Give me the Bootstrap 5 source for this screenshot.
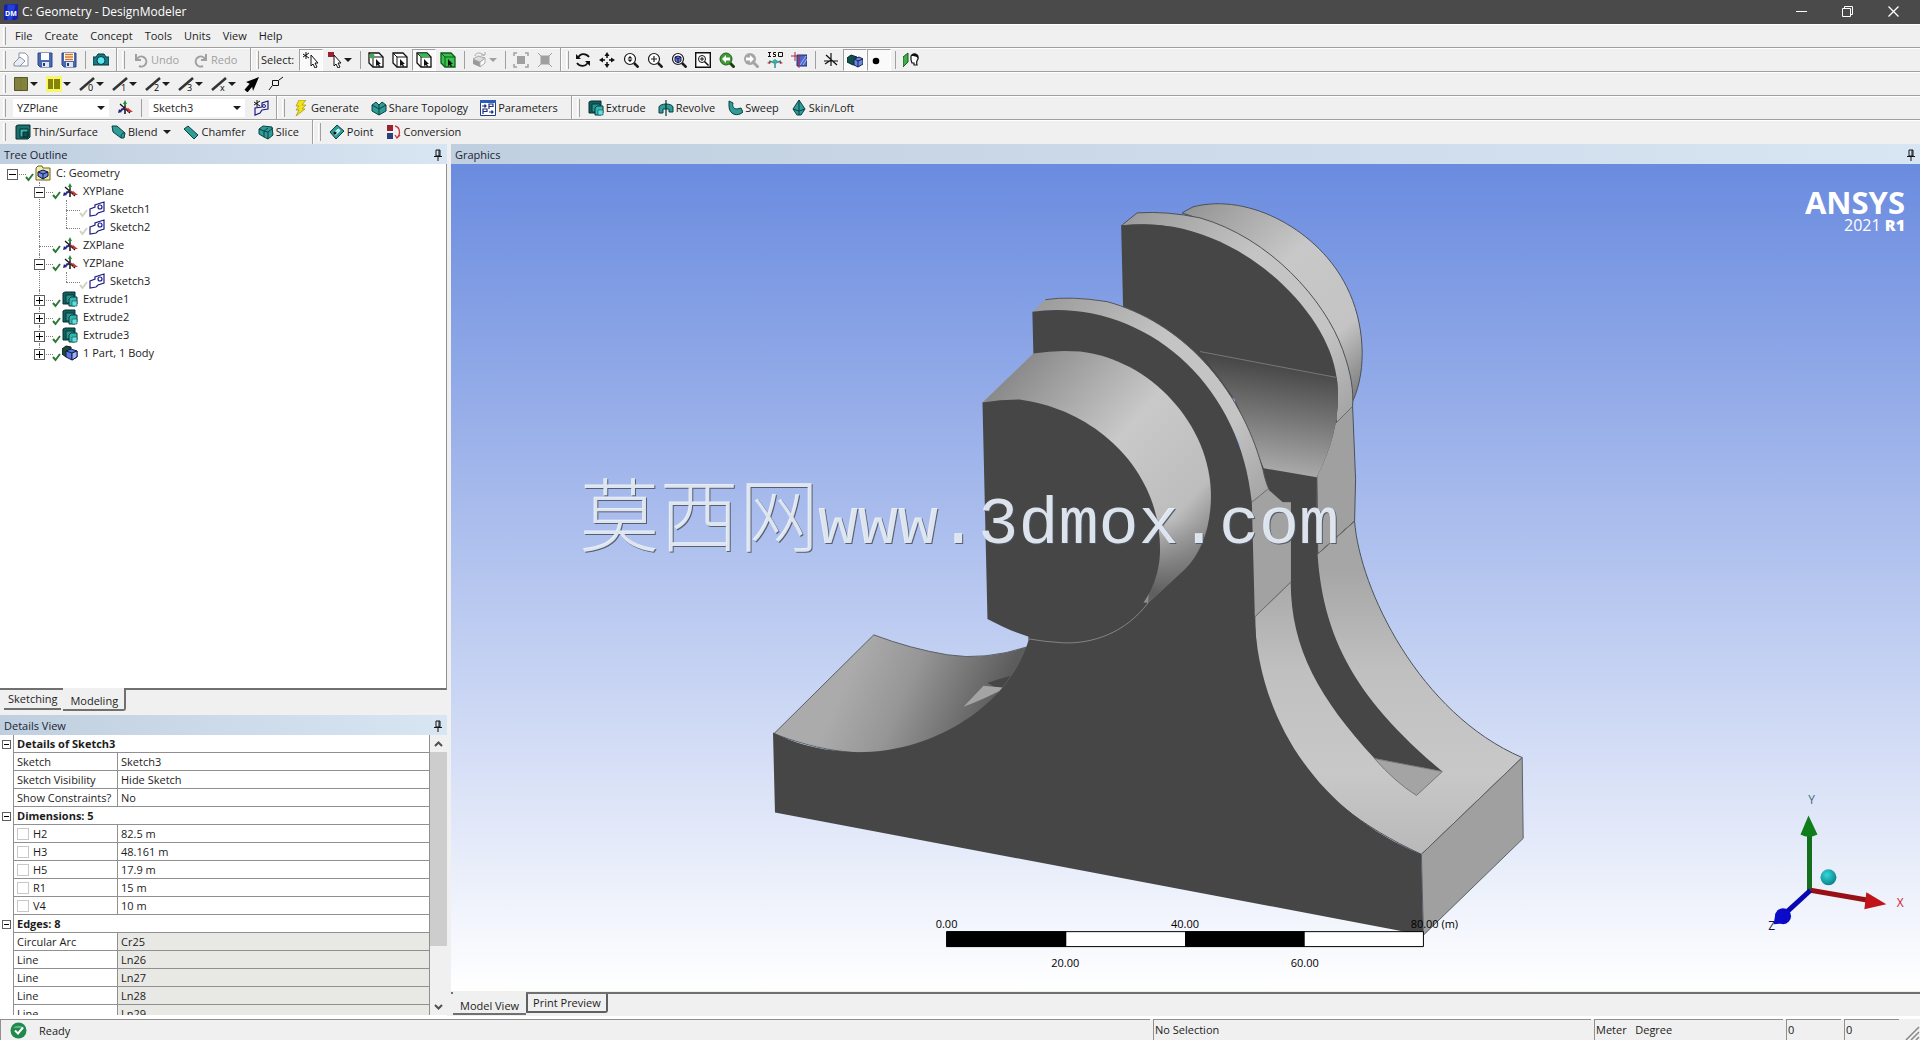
<!DOCTYPE html>
<html lang="en">
<head>
<meta charset="utf-8">
<meta name="viewport" content="width=device-width, initial-scale=1">
<title>C: Geometry - DesignModeler</title>
<link href="https://cdn.jsdelivr.net/npm/bootstrap@5.3.0/dist/css/bootstrap.min.css" rel="stylesheet">
<style>
:root { --face:#f0f0f0; --line:#a0a0a0; --ink:#1c1c1c; }
body { font-family:"Open Sans","Noto Sans",sans-serif; font-size:11px; line-height:18px; color:var(--ink); background:var(--face); }
svg { display:block; flex:none; }
button { font:inherit; color:inherit; }
.ic { width:16px; height:16px; overflow:visible; }
.titlebar { height:24px; padding-bottom:1px; background:#4a4a4a; color:#fff; }
.titlebar > span { font-size:12px; }
.win-btn { width:46px; height:23px; border:0; background:none; color:#fff; padding:0; display:flex; align-items:center; justify-content:center; }
.bar { height:24px; border-bottom:1px solid var(--line); box-shadow:inset 0 1px #fff; }
.bar.last-bar { border-bottom:0; }
.bar > * { flex:none; }
.menu-link { color:inherit; text-decoration:none; padding:0 6px; }
.grip { width:9px; height:18px; position:relative; }
.grip::before { content:""; display:block; width:3px; height:18px; margin-left:3px; border-right:1px solid var(--line); border-left:1px solid #fff; }
.grip.slim { width:6px; }
.grip.slim::before { margin-left:1px; }
.rule { width:8px; height:18px; display:flex; justify-content:center; }
.rule::before { content:""; width:1px; background:var(--line); }
.band-end { width:8px; align-self:stretch; display:flex; justify-content:center; }
.band-end::before { content:""; width:2px; background:var(--line); border-right:1px solid #fff; }
.tool { width:24px; height:22px; border:0; background:none; padding:0; display:flex; align-items:center; justify-content:center; }
.tool.pressed { background:#fafafa; border:1px solid; border-color:var(--line) #fff #fff var(--line); }
.tool.wide { width:33px; justify-content:flex-start; padding-left:4px; }
.tool.dim, .cmd.dim { color:#a0a0a0; }
.cmd { height:22px; border:0; background:none; padding:0 6px; display:flex; align-items:center; gap:2px; white-space:nowrap; }
.cmd.dim { width:60px; }
.sel-label { width:38px; }
.caret { width:0; height:0; border:4px solid transparent; border-top-color:currentColor; border-bottom:0; margin-left:1px; }
.dim .caret { color:#a0a0a0; }
.pick { position:relative; width:96px; }
.pick select { appearance:none; width:100%; height:18px; border:0; background:#fff; padding:0 4px; font:inherit; color:inherit; }
.pick .caret { position:absolute; right:4px; top:7px; pointer-events:none; }
.side { width:447px; flex:none; margin-right:4px; }
.pane-head { height:20px; background:linear-gradient(90deg,#c0cfdf,#d8e5f3); padding:1px 4px 0; color:#1a2433; flex:none; }
.tree-box { background:#fff; flex:1 1 0; min-height:0; overflow:hidden; border-bottom:2px solid #707070; border-right:1px solid #909090; }
.tree-box ul { list-style:none; margin:0; padding:0; }
.tree-box li ul { padding-left:27px; }
.tree-box li { position:relative; }
.tree-box li li::before { content:""; position:absolute; left:12px; top:0; bottom:0; border-left:1px dotted #808080; }
.tree-box li li:last-child::before { bottom:auto; height:10px; }
.tree-row { height:18px; display:flex; align-items:center; position:relative; }
.tree-row::before { content:""; position:absolute; left:12px; width:14px; top:10px; border-top:1px dotted #808080; }
.twist { width:11px; height:11px; margin:2px 6px 0 7px; background:#fff; border:1px solid #606060; padding:0; position:relative; display:flex; align-items:center; justify-content:center; }
.twist::before { content:""; width:7px; height:1px; background:#000; }
.twist.plus::after { content:""; position:absolute; left:4px; top:1px; height:7px; width:1px; background:#000; }
.no-twist { width:24px; }
.tick { width:11px; height:11px; margin-top:6px; color:#2c7a37; position:relative; }
.tick.pale { color:#d3d3c4; }
.tree-row .ic { margin-right:5px; }
.tabs-strip { height:25px; flex:none; display:flex; align-items:flex-start; }
.tab-btn { border:0; background:var(--face); height:20px; padding:0 4px; }
.tab-back { border-bottom:2px solid #707070; margin-left:4px; height:20px; }
.tab-front { border:solid #707070; border-width:0 2px 2px 0; border-radius:0 0 3px 0; margin:-2px 0 0 2px; height:23px; padding:4px 6px 0 7px; }
.prop-area { height:281px; flex:none; overflow:hidden; background:#fff; border-bottom:1px solid #fff; }
.prop-table { width:100%; border-collapse:separate; border-spacing:0; table-layout:fixed; line-height:17px; flex:1 1 0; align-self:flex-start; }
.prop-table td, .prop-table th { height:18px; padding:0 3px; border:1px solid #909090; border-width:0 1px 1px 0; font-weight:400; white-space:nowrap; }
.prop-table .gutter { border-bottom:0; padding:0 0 0 2px; }
.prop-table .gutter .twist { width:9px; height:9px; margin:0; }
.prop-table .gutter .twist::before { width:5px; }
.prop-table .head-cell { font-weight:700; }
.prop-table .locked { background:#e8e8e5; }
.prop-table input { appearance:none; width:12px; height:12px; border:1px solid #c8c8c8; background:#fff; margin:0 4px 0 0; vertical-align:-2px; display:inline-block; }
.scroller { width:17px; flex:none; background:var(--face); color:#505050; }
.scroller .thumb { flex:79 0 0; background:#cdcdcd; }
.scroller .trail { flex:21 0 0; }
.scroller .step { height:17px; border:0; padding:0; background:none; display:flex; align-items:center; justify-content:center; }
.view-area { background:linear-gradient(#6a8bdf,#fff); flex:1 1 0; min-height:0; position:relative; overflow:hidden; }
.scene { width:100%; height:100%; position:absolute; inset:0; }
.brand { position:absolute; right:15px; top:24px; color:#fff; text-align:right; }
.brand b { display:block; font-size:31px; line-height:28px; }
.brand span { display:block; font-size:16px; line-height:18px; }
.brand strong { font-weight:800; }
.view-tabs { height:24px; flex:none; border-top:2px solid #707070; margin-top:1px; display:flex; align-items:flex-start; }
.view-front { border-bottom:2px solid #707070; margin:-2px 0 0 2px; height:23px; padding:5px 7px 0; }
.view-back { border:1px solid #606060; border-width:0 2px 2px 2px; border-radius:0 0 3px 0; height:19px; line-height:17px; padding:0 5px; }
.status { height:24px; flex:none; border-top:3px solid #fff; }
.cell { border-top:1px solid #909090; border-left:1px solid #909090; margin-right:3px; height:21px; line-height:19px; padding-left:1px; white-space:pre; }
.cell-sel { width:438px; } .cell-unit { width:189px; } .cell-num { width:55px; }
</style>
<script src="https://cdn.jsdelivr.net/npm/bootstrap@5.3.0/dist/js/bootstrap.bundle.min.js"></script>
</head>
<body class="vh-100 d-flex flex-column overflow-hidden">

<svg width="0" height="0" class="position-absolute" aria-hidden="true">
  <symbol id="check" viewBox="0 0 11 11"><path d="M2 6l2.500 3L9 3" fill="none" stroke="currentColor" stroke-width="2"/></symbol>
  <symbol id="pin" viewBox="0 0 10 12"><path d="M3 1h4v6H3zM1 7.500h8M5 8v4M6 1v6" fill="none" stroke="#111"/></symbol>
  <symbol id="axes" viewBox="0 0 16 16"><path d="M3 4l10 9M4 9h5" stroke="#111" stroke-width="1.200"/><path d="M8 14V5" stroke="#111" stroke-width="1.500"/><path d="M8 6V3" stroke="#2a8a3a" stroke-width="2"/><path d="M6 4l2-4 2 4z" fill="#2a8a3a"/><path d="M8 8l4 2" stroke="#b33" stroke-width="1.500"/><path d="M11 8l5 4-5 0z" fill="#c33"/><path d="M8 8l-5 3" stroke="#228" stroke-width="1.500"/><path d="M1 13l1-4 3 3z" fill="#228"/></symbol>
  <symbol id="sketch" viewBox="0 0 16 16"><path d="M1 8l5-2V4l9-3v9l-6 2-2 2-6 1z" fill="#fff" stroke="#1d1d86" stroke-width="1.200"/><circle cx="11" cy="6" r="2" fill="none" stroke="#1d1d86" stroke-width="1.200"/></symbol>
  <symbol id="newsketch" viewBox="0 0 16 16"><path d="M2 8v7l5-2 2-3 6-1V1L9 3v4z" fill="none" stroke="#1d1d86" stroke-width="1.200"/><circle cx="11" cy="6" r="1.500" fill="none" stroke="#1d1d86"/><path d="M4 0v7M1 2l6 4M1 5l6-4" stroke="#111"/></symbol>
  <symbol id="extrude" viewBox="0 0 16 16"><path d="M1 2l2-1h10v10l-2 2H1z" fill="#12605e" stroke="#062f30"/><path d="M4 4h8v8H4z" fill="#2a9490" stroke="#073b3b"/><path d="M7 8l2-2h6v7l-2 2H7z" fill="#35b5b0" stroke="#073b3b"/><path d="M10 10h5v5h-5z" fill="#6fdcdc" stroke="#0b5c5c" stroke-width=".7"/></symbol>
  <symbol id="body" viewBox="0 0 16 16"><path d="M0 4l4-3 5 1v8l-5 2-4-3z" fill="#1c4a34" stroke="#0a2115"/><path d="M4 6l5-2 6 2v6l-5 3-6-3z" fill="#5978d8" stroke="#141b52"/><path d="M4 6l6 2 5-2M10 8v7" fill="none" stroke="#141b52"/><path d="M10 8l5-2v6l-5 3z" fill="#9db2f3" stroke="#141b52"/></symbol>
  <symbol id="root" viewBox="0 0 16 16"><path d="M1 3l2-2h4l1 2h7v12H1z" fill="#f1ebac" stroke="#6b6414"/><path d="M3 7l5-2 5 2v4l-5 3-5-3z" fill="#6f8ce0" stroke="#101544"/><path d="M3 7l5 2 5-2M8 9v5" fill="none" stroke="#101544"/></symbol>
  <symbol id="newdoc" viewBox="0 0 16 16"><path d="M6 1h6l3 3v10H6z" fill="#fff" stroke="#8a93a8"/><path d="M1 11l6-6 5 4-5 5H1z" fill="#e9ecf3" stroke="#8a93a8"/></symbol>
  <symbol id="save" viewBox="0 0 16 16"><path d="M1 1h14v14H3l-2-2z" fill="#4a68b0" stroke="#2f4888"/><path d="M4 1h8v7H4z" fill="#fff"/><path d="M5 10h7v5H5z" fill="#dfe5f2"/><path d="M6 11h2v3H6z" fill="#233a78"/></symbol>
  <symbol id="saveas" viewBox="0 0 16 16"><path d="M1 1h14v14H3l-2-2z" fill="#4a68b0" stroke="#2f4888"/><path d="M3 1h10v8H3z" fill="#fff"/><path d="M4 2.500h8M4 5h8M4 7.500h8" stroke="#d8781e" stroke-width="1.300"/><path d="M5 10h7v5H5z" fill="#dfe5f2"/><path d="M6 11h2v3H6z" fill="#233a78"/></symbol>
  <symbol id="camera" viewBox="0 0 16 16"><path d="M0 5h3l2-3h6l2 3h3v8H0z" fill="#147a86" stroke="#06343a"/><circle cx="8" cy="8.500" r="4" fill="#5ee5ee" stroke="#06343a"/></symbol>
  <symbol id="undo" viewBox="0 0 16 16"><path d="M3 2v6h5M4 7a5 5 0 1 1 2 7" fill="none" stroke="currentColor" stroke-width="2"/></symbol>
  <symbol id="redo" viewBox="0 0 16 16"><path d="M13 2v6H8M12 7a5 5 0 1 0-2 7" fill="none" stroke="currentColor" stroke-width="2"/></symbol>
  <symbol id="pickone" viewBox="0 0 16 16"><path d="M3 0v7M0 2l6 4M0 5l6-4" stroke="#111"/><path d="M8 3v11l2-2 2 4 2-1-2-4h3z" fill="#fff" stroke="#111"/></symbol>
  <symbol id="pickmode" viewBox="0 0 16 16"><path d="M1 0h6v5H1z" fill="#9c1f30"/><path d="M7 3v11l2-2 2 4 2-1-2-4h3z" fill="#fff" stroke="#111"/></symbol>
  <symbol id="cube" viewBox="0 0 16 16"><path d="M1 1h10l4 4v10H5l-4-4z" fill="#fff" stroke="#111" stroke-width="1.300"/><path d="M5 5h10M5 5v10M5 5L1 1" fill="none" stroke="#111"/><path d="M8 7v7l2-1 1 2 1-1-1-2h2z" fill="#111"/></symbol>
  <symbol id="cube-v" viewBox="0 0 16 16"><use href="#cube"/><circle cx="4" cy="4" r="2.500" fill="#48a652"/></symbol>
  <symbol id="cube-f" viewBox="0 0 16 16"><use href="#cube"/><path d="M2 1.500h9L14 5H5z" fill="#2fbf4d"/></symbol>
  <symbol id="cube-b" viewBox="0 0 16 16"><path d="M1 1h10l4 4v10H5l-4-4z" fill="#3bc24e" stroke="#0f5a1b" stroke-width="1.300"/><path d="M5 5h10M5 5v10M5 5L1 1" fill="none" stroke="#0f5a1b"/><path d="M8 7v7l2-1 1 2 1-1-1-2h2z" fill="#111"/></symbol>
  <symbol id="graycube" viewBox="0 0 16 16"><path d="M1 7l7 3v5l-7-3z" fill="#999"/><path d="M8 10l5-4v5l-5 4z" fill="#fff" stroke="#aaa"/><path d="M1 7l5-3 7 2-5 4z" fill="#ddd" stroke="#aaa"/><path d="M3 4c0-4 7-4 9 0M9 3h4V0" fill="none" stroke="#aaa"/></symbol>
  <symbol id="expand" viewBox="0 0 16 16"><path d="M4 4h8v8H4z" fill="#a0a0a0"/><path d="M1 4V1h3M12 1h3v3M15 12v3h-3M4 15H1v-3" fill="none" stroke="#a0a0a0" stroke-width="1.500"/></symbol>
  <symbol id="shrink" viewBox="0 0 16 16"><path d="M4 4h8v8H4zM1 1l14 14M15 1L1 15" fill="#a0a0a0" stroke="#a0a0a0"/></symbol>
  <symbol id="rotate" viewBox="0 0 16 16"><path d="M3 6c2-5 8-5 11-1M13 10c-2 5-8 5-11 1" fill="none" stroke="#111" stroke-width="1.800"/><path d="M1 2v5h5zM15 14V9h-5z" fill="#111"/></symbol>
  <symbol id="pan" viewBox="0 0 16 16"><path d="M8 2v4M8 10v4M2 8h4M10 8h4" stroke="#111" stroke-width="1.500"/><path d="M5.500 4L8 0l2.500 4zM5.500 12L8 16l2.500-4zM4 5.500L0 8l4 2.500zM12 5.500L16 8l-4 2.500z" fill="#111"/></symbol>
  <symbol id="lens" viewBox="0 0 16 16"><circle cx="7" cy="7" r="5.500" fill="#fff" stroke="currentColor" stroke-width="1.200"/><path d="M11 11l4.500 4.500" stroke="currentColor" stroke-width="2.500"/></symbol>
  <symbol id="zoomdrag" viewBox="0 0 16 16"><use href="#lens"/><path d="M4.500 6.500L7 4l2.500 2.500zM4.500 7.500L7 10l2.500-2.500z" fill="#111"/></symbol>
  <symbol id="zoomin" viewBox="0 0 16 16"><use href="#lens"/><path d="M7 4v6M4 7h6" stroke="currentColor" stroke-width="1.200"/></symbol>
  <symbol id="zoomfit" viewBox="0 0 16 16"><use href="#lens"/><path d="M4 5l3-1 3 1v4l-3 2-3-2z" fill="#6a7ad0" stroke="#15154e"/><path d="M4 5l3 2 3-2M7 7v4" fill="none" stroke="#15154e"/></symbol>
  <symbol id="zoombox" viewBox="0 0 16 16"><path d="M.7.700h14.600v14.600H.7z" fill="#fff" stroke="#111" stroke-width="1.400"/><circle cx="7" cy="7" r="3.500" fill="none" stroke="#111"/><path d="M9.500 9.500l4 4" stroke="#111" stroke-width="1.600"/><path d="M7 5v4M5 7h4" stroke="#111"/></symbol>
  <symbol id="zoomprev" viewBox="0 0 16 16"><path d="M11 11l4.500 4.500" stroke="#1d3d12" stroke-width="3"/><circle cx="7" cy="7" r="6" fill="#3e9a36" stroke="#255f1f"/><path d="M7 3L3 7l4 4V8.500h4v-3H7z" fill="#fff"/></symbol>
  <symbol id="zoomnext" viewBox="0 0 16 16"><path d="M11 11l4.500 4.500" stroke="#a5a5a5" stroke-width="3"/><circle cx="7" cy="7" r="6" fill="#a5a5a5"/><path d="M7 3l4 4-4 4V8.500H3v-3h4z" fill="#fff"/></symbol>
  <symbol id="iso" viewBox="0 0 16 16"><path d="M1 .500h3M2.500 0v5M1 4.500h3M9 .500H6.500V2.500h2v2H6M11.500 .500h4v4h-4z" fill="none" stroke="#111"/><path d="M8 8v8M8 11l-6-2M8 11l6-2" stroke="#2a9490" stroke-width="1.500"/><path d="M0 11l3 1 1-3zM16 11l-3 1-1-3z" fill="#b32a3a"/><path d="M5 9l3-2 3 2-3 4z" fill="#37b0a0"/></symbol>
  <symbol id="lookat" viewBox="0 0 16 16"><path d="M6 3h10v11H6z" fill="#4a66c8" stroke="#1c2c78"/><path d="M9 13l6-9M12 13l4-6" stroke="#a9b9f0"/><path d="M0 4h10M4 0v9" stroke="#a02a4a"/><path d="M8 4v12" stroke="#c02036"/></symbol>
  <symbol id="blackaxes" viewBox="0 0 16 16"><path d="M8 1v13M1 9h14M3 3l11 10M8 8l-6 4" stroke="#111" stroke-width="1.200"/></symbol>
  <symbol id="blocks" viewBox="0 0 16 16"><path d="M0 6l4-3 6 2v7l-4 1-6-3z" fill="#12504a" stroke="#062a28"/><path d="M7 7l5-2 4 2v5l-5 3-4-2z" fill="#6c88de" stroke="#161f5c"/><path d="M7 7l4 2 5-2M11 9v6" fill="none" stroke="#161f5c"/></symbol>
  <symbol id="dot" viewBox="0 0 16 16"><circle cx="5" cy="9" r="3.300" fill="#000"/></symbol>
  <symbol id="face" viewBox="0 0 16 16"><path d="M0 5l5-4v9l-5 5z" fill="#3fae4d" stroke="#17591f"/><path d="M8 4c2-4 8-2 7 3-1 2-2 2-1 6h-3v-2H9l-1-3z" fill="#fff" stroke="#111" stroke-width="1.200"/><path d="M8 4c2-4 8-2 7 3-1-3-4-3-7-3z" fill="#111"/></symbol>
  <symbol id="swatch-olive" viewBox="0 0 16 16"><path d="M1.500 1.500h13v13h-13z" fill="#82823c" stroke="#55552a"/><path d="M8 2v12" stroke="#77773a"/></symbol>
  <symbol id="swatch-hot" viewBox="0 0 16 16"><path d="M0 0h16v16H0z" fill="#f6f66a"/><path d="M2 3h5v10H2zM8 3h6v10H8z" fill="#84840a"/></symbol>
  <symbol id="strokeline" viewBox="0 0 16 16"><path d="M1 14L15 2" stroke="#333" stroke-width="2.500"/></symbol>
  <symbol id="bigarrow" viewBox="0 0 16 16"><path d="M2 15l6-7" stroke="#000" stroke-width="4"/><path d="M15 1L2 6l4 2 2 2 1 5z" fill="#000"/></symbol>
  <symbol id="tracker" viewBox="0 0 16 16"><path d="M4.500 4.500h6v5h-6zM1 14l3-4M11 4l4-3" fill="none" stroke="#111"/></symbol>
  <symbol id="bolt" viewBox="0 0 16 16"><path d="M6 0h7L9 5h4l-4 4h3L3 16l3-6H3l3-4H3z" fill="#f2e21c" stroke="#a59a12" stroke-width=".8"/></symbol>
  <symbol id="share" viewBox="0 0 16 16"><path d="M1 5l4-3 3 3 3-3 4 3v6l-7 4-7-4z" fill="#2f9c97" stroke="#0a4141"/><path d="M1 5l7 4 7-4M8 5v10" fill="none" stroke="#0a4141"/></symbol>
  <symbol id="params" viewBox="0 0 16 16"><path d="M.5.500h15v15H.5z" fill="#fff" stroke="#1d3c8a"/><path d="M0 0h16v3H0z" fill="#2a5bb5"/><path d="M2 6h4M4.500 4.500L6 6 4.500 7.500M9 9V4h4v2.500H9M3 14V9h4v2.500H3M9 12h4M11.500 10.500L13 12l-1.500 1.500" fill="none" stroke="#1d2c7a" stroke-width="1.200"/></symbol>
  <symbol id="revolve" viewBox="0 0 16 16"><path d="M1 7c1-4 13-4 14 0v5h-4V9H5v4H1z" fill="#2f9c97" stroke="#0a4141"/><path d="M8 0v16" stroke="#0a2d2d" stroke-width="1.200"/></symbol>
  <symbol id="sweep" viewBox="0 0 16 16"><path d="M2 1l4 2c-1 4 1 6 4 6l4-1 2 4c-5 5-14 3-14-6z" fill="#2f9c97" stroke="#0a4141"/></symbol>
  <symbol id="loft" viewBox="0 0 16 16"><path d="M8 0l6 9-4 6H6L2 9z" fill="#2f9c97" stroke="#0a4141"/><path d="M8 0v15M2 9l6 2 6-2" fill="none" stroke="#0a4141"/></symbol>
  <symbol id="thin" viewBox="0 0 16 16"><path d="M1 2l2-1h12v12l-2 2H1z" fill="#1b6f6c" stroke="#062f30"/><path d="M5 5h8v8H5z" fill="#3cb3ad" stroke="#062f30"/><path d="M8 8h5v5H8z" fill="#134f4e" stroke="#062f30"/></symbol>
  <symbol id="blend" viewBox="0 0 16 16"><path d="M2 2h5l8 7-1 5h-3L3 8z" fill="#2f9c97" stroke="#0a4141"/><path d="M11 14c0-4 1-5 4-5" fill="none" stroke="#0a4141"/></symbol>
  <symbol id="chamfer" viewBox="0 0 16 16"><path d="M1 5l4-3 10 9-4 4z" fill="#2f9c97" stroke="#0a4141"/></symbol>
  <symbol id="slice" viewBox="0 0 16 16"><path d="M1 5l4-3 9 1 1 8-5 4-4-2-5-3z" fill="#2f9c97" stroke="#0a4141"/><path d="M1 5l5 2 4-3M6 7v6M6 7l4 1 5-4M10 8v7" fill="none" stroke="#0a4141"/></symbol>
  <symbol id="point" viewBox="0 0 16 16"><path d="M8 1l7 6-8 8-6-7z" fill="#2f9c97" stroke="#0a4141"/><path d="M6 8l4-3M6 11l5-5" stroke="#d5ffff" stroke-width="1.500"/><circle cx="6" cy="9" r="1.500" fill="#111"/></symbol>
  <symbol id="convert" viewBox="0 0 16 16"><path d="M1 1h6v6H1z" fill="#9a2230"/><path d="M1 9h6v6H1z" fill="#28407f"/><path d="M9 2c5 1 6 8 2 12M14 11l-3 3-2-3" fill="none" stroke="#c8323c" stroke-width="1.300"/></symbol>
</svg>

<header>
  <div class="titlebar d-flex align-items-center">
    <svg class="ms-1" width="14" height="18" viewBox="0 0 16 18"><path d="M0 1l3-1h13v16l-3 2H0z" fill="#1522b0"/><path d="M4 0l9 1-4 17H4z" fill="#2440d8"/><text x="8" y="13" font-size="8" font-weight="700" fill="#fff" text-anchor="middle">DM</text></svg>
    <span class="ms-1">C: Geometry - DesignModeler</span>
    <div class="ms-auto d-flex">
      <button class="win-btn" aria-label="Minimize"><svg width="11" height="11"><path d="M0 5.500h11" stroke="#fff"/></svg></button>
      <button class="win-btn" aria-label="Restore"><svg width="11" height="11" viewBox="0 0 11 11"><path d="M.5 2.500h8v8h-8zM2.500 2V.500h8v8H9" fill="none" stroke="#fff"/></svg></button>
      <button class="win-btn me-1" aria-label="Close"><svg width="11" height="11" viewBox="0 0 11 11"><path d="M.5.500l10 10M10.500.500l-10 10" stroke="#fff" stroke-width="1.300"/></svg></button>
    </div>
  </div>

  <nav class="bar d-flex align-items-center" aria-label="Main menu">
    <span class="grip"></span>
    <a class="menu-link" href="#">File</a><a class="menu-link" href="#">Create</a><a class="menu-link" href="#">Concept</a><a class="menu-link" href="#">Tools</a><a class="menu-link" href="#">Units</a><a class="menu-link" href="#">View</a><a class="menu-link" href="#">Help</a>
  </nav>

  <div class="bar d-flex align-items-center" role="toolbar" aria-label="Standard">
    <span class="grip"></span>
    <button class="tool" aria-label="New"><svg class="ic"><use href="#newdoc"/></svg></button>
    <button class="tool" aria-label="Save"><svg class="ic"><use href="#save"/></svg></button>
    <button class="tool" aria-label="Save as"><svg class="ic"><use href="#saveas"/></svg></button>
    <span class="rule"></span>
    <button class="tool" aria-label="Capture"><svg class="ic"><use href="#camera"/></svg></button>
    <span class="band-end"></span><span class="grip slim"></span>
    <button class="cmd dim"><svg class="ic"><use href="#undo"/></svg>Undo</button>
    <button class="cmd dim"><svg class="ic"><use href="#redo"/></svg>Redo</button>
    <span class="band-end"></span><span class="grip slim"></span>
    <span class="sel-label">Select:</span>
    <button class="tool pressed" aria-label="New selection"><svg class="ic"><use href="#pickone"/></svg></button>
    <button class="tool wide" aria-label="Select mode"><svg class="ic"><use href="#pickmode"/></svg><span class="caret"></span></button>
    <span class="rule"></span>
    <button class="tool" aria-label="Points"><svg class="ic"><use href="#cube-v"/></svg></button>
    <button class="tool" aria-label="Edges"><svg class="ic"><use href="#cube"/></svg></button>
    <button class="tool pressed" aria-label="Faces"><svg class="ic"><use href="#cube-f"/></svg></button>
    <button class="tool" aria-label="Bodies"><svg class="ic"><use href="#cube-b"/></svg></button>
    <span class="rule"></span>
    <button class="tool wide dim" aria-label="Extend"><svg class="ic"><use href="#graycube"/></svg><span class="caret"></span></button>
    <span class="rule"></span>
    <button class="tool" aria-label="Expand"><svg class="ic"><use href="#expand"/></svg></button>
    <button class="tool" aria-label="Shrink"><svg class="ic"><use href="#shrink"/></svg></button>
    <span class="band-end"></span><span class="grip slim"></span>
    <button class="tool" aria-label="Rotate"><svg class="ic"><use href="#rotate"/></svg></button>
    <button class="tool" aria-label="Pan"><svg class="ic"><use href="#pan"/></svg></button>
    <button class="tool" aria-label="Zoom"><svg class="ic"><use href="#zoomdrag"/></svg></button>
    <button class="tool" aria-label="Box zoom"><svg class="ic"><use href="#zoomin"/></svg></button>
    <button class="tool" aria-label="Zoom to fit"><svg class="ic"><use href="#zoomfit"/></svg></button>
    <button class="tool" aria-label="Magnifier"><svg class="ic"><use href="#zoombox"/></svg></button>
    <button class="tool" aria-label="Previous view"><svg class="ic"><use href="#zoomprev"/></svg></button>
    <button class="tool" aria-label="Next view"><svg class="ic"><use href="#zoomnext"/></svg></button>
    <button class="tool" aria-label="Isometric view"><svg class="ic"><use href="#iso"/></svg></button>
    <button class="tool" aria-label="Look at plane"><svg class="ic"><use href="#lookat"/></svg></button>
    <span class="rule"></span>
    <button class="tool" aria-label="Display plane"><svg class="ic"><use href="#blackaxes"/></svg></button>
    <button class="tool pressed" aria-label="Display model"><svg class="ic"><use href="#blocks"/></svg></button>
    <button class="tool pressed" aria-label="Display points"><svg class="ic"><use href="#dot"/></svg></button>
    <span class="rule"></span>
    <button class="tool" aria-label="Look at face"><svg class="ic"><use href="#face"/></svg></button>
  </div>

  <div class="bar d-flex align-items-center" role="toolbar" aria-label="Display">
    <span class="grip"></span>
    <button class="tool wide" aria-label="Face colour"><svg class="ic"><use href="#swatch-olive"/></svg><span class="caret"></span></button>
    <button class="tool wide" aria-label="Edge colour"><svg class="ic"><use href="#swatch-hot"/></svg><span class="caret"></span></button>
    <button class="tool wide" aria-label="Free edges"><svg class="ic"><use href="#strokeline"/><text x="9" y="15" font-size="9">0</text></svg><span class="caret"></span></button>
    <button class="tool wide" aria-label="Single edges"><svg class="ic"><use href="#strokeline"/><text x="9" y="15" font-size="9">1</text></svg><span class="caret"></span></button>
    <button class="tool wide" aria-label="Double edges"><svg class="ic"><use href="#strokeline"/><text x="9" y="15" font-size="9">2</text></svg><span class="caret"></span></button>
    <button class="tool wide" aria-label="Triple edges"><svg class="ic"><use href="#strokeline"/><text x="9" y="15" font-size="9">3</text></svg><span class="caret"></span></button>
    <button class="tool wide" aria-label="Multiple edges"><svg class="ic"><use href="#strokeline"/><text x="9" y="15" font-size="9">x</text></svg><span class="caret"></span></button>
    <button class="tool" aria-label="Edge direction"><svg class="ic"><use href="#bigarrow"/></svg></button>
    <button class="tool" aria-label="Vertices"><svg class="ic"><use href="#tracker"/></svg></button>
  </div>

  <div class="bar d-flex align-items-center" role="toolbar" aria-label="Features">
    <span class="grip me-1"></span>
    <label class="pick"><select aria-label="Active plane"><option>YZPlane</option><option>XYPlane</option><option>ZXPlane</option></select><span class="caret"></span></label>
    <button class="tool ms-1" aria-label="New plane"><svg class="ic"><use href="#axes"/></svg></button>
    <span class="rule me-1"></span>
    <label class="pick"><select aria-label="Active sketch"><option>Sketch3</option><option>Sketch2</option><option>Sketch1</option></select><span class="caret"></span></label>
    <button class="tool ms-1" aria-label="New sketch"><svg class="ic"><use href="#newsketch"/></svg></button>
    <span class="band-end"></span><span class="grip slim"></span>
    <button class="cmd"><svg class="ic"><use href="#bolt"/></svg>Generate</button>
    <button class="cmd"><svg class="ic"><use href="#share"/></svg>Share Topology</button>
    <button class="cmd"><svg class="ic"><use href="#params"/></svg>Parameters</button>
    <span class="band-end ms-1"></span><span class="grip slim"></span>
    <button class="cmd"><svg class="ic"><use href="#extrude"/></svg>Extrude</button>
    <button class="cmd"><svg class="ic"><use href="#revolve"/></svg>Revolve</button>
    <button class="cmd"><svg class="ic"><use href="#sweep"/></svg>Sweep</button>
    <button class="cmd"><svg class="ic"><use href="#loft"/></svg>Skin/Loft</button>
  </div>

  <div class="bar last-bar d-flex align-items-center" role="toolbar" aria-label="Modify">
    <span class="grip"></span>
    <button class="cmd"><svg class="ic"><use href="#thin"/></svg>Thin/Surface</button>
    <button class="cmd"><svg class="ic"><use href="#blend"/></svg>Blend<span class="caret ms-1"></span></button>
    <button class="cmd"><svg class="ic"><use href="#chamfer"/></svg>Chamfer</button>
    <button class="cmd"><svg class="ic"><use href="#slice"/></svg>Slice</button>
    <span class="band-end ms-1"></span><span class="grip slim"></span>
    <button class="cmd"><svg class="ic"><use href="#point"/></svg>Point</button>
    <button class="cmd"><svg class="ic"><use href="#convert"/></svg>Conversion</button>
  </div>
</header>

<main class="d-flex flex-grow-1 overflow-hidden">
  <aside class="side d-flex flex-column">
    <div class="pane-head d-flex align-items-center justify-content-between">Tree Outline<svg width="10" height="12"><use href="#pin"/></svg></div>
    <div class="tree-box">
      <ul>
        <li>
          <div class="tree-row"><button class="twist" aria-label="Collapse"></button><svg class="tick"><use href="#check"/></svg><svg class="ic"><use href="#root"/></svg>C: Geometry</div>
          <ul>
            <li><div class="tree-row"><button class="twist" aria-label="Collapse"></button><svg class="tick"><use href="#check"/></svg><svg class="ic"><use href="#axes"/></svg>XYPlane</div>
              <ul>
                <li><div class="tree-row"><span class="no-twist"></span><svg class="tick pale"><use href="#check"/></svg><svg class="ic"><use href="#sketch"/></svg>Sketch1</div></li>
                <li><div class="tree-row"><span class="no-twist"></span><svg class="tick pale"><use href="#check"/></svg><svg class="ic"><use href="#sketch"/></svg>Sketch2</div></li>
              </ul>
            </li>
            <li><div class="tree-row"><span class="no-twist"></span><svg class="tick"><use href="#check"/></svg><svg class="ic"><use href="#axes"/></svg>ZXPlane</div></li>
            <li><div class="tree-row"><button class="twist" aria-label="Collapse"></button><svg class="tick"><use href="#check"/></svg><svg class="ic"><use href="#axes"/></svg>YZPlane</div>
              <ul>
                <li><div class="tree-row"><span class="no-twist"></span><svg class="tick pale"><use href="#check"/></svg><svg class="ic"><use href="#sketch"/></svg>Sketch3</div></li>
              </ul>
            </li>
            <li><div class="tree-row"><button class="twist plus" aria-label="Expand"></button><svg class="tick"><use href="#check"/></svg><svg class="ic"><use href="#extrude"/></svg>Extrude1</div></li>
            <li><div class="tree-row"><button class="twist plus" aria-label="Expand"></button><svg class="tick"><use href="#check"/></svg><svg class="ic"><use href="#extrude"/></svg>Extrude2</div></li>
            <li><div class="tree-row"><button class="twist plus" aria-label="Expand"></button><svg class="tick"><use href="#check"/></svg><svg class="ic"><use href="#extrude"/></svg>Extrude3</div></li>
            <li><div class="tree-row"><button class="twist plus" aria-label="Expand"></button><svg class="tick"><use href="#check"/></svg><svg class="ic"><use href="#body"/></svg>1 Part, 1 Body</div></li>
          </ul>
        </li>
      </ul>
    </div>
    <div class="tabs-strip"><button class="tab-btn tab-back">Sketching</button><button class="tab-btn tab-front">Modeling</button></div>
    <div class="pane-head d-flex align-items-center justify-content-between">Details View<svg width="10" height="12"><use href="#pin"/></svg></div>
    <div class="prop-area d-flex">
      <table class="prop-table">
        <colgroup><col style="width:14px"><col style="width:104px"><col></colgroup>
        <tbody>
          <tr><td class="gutter"><button class="twist" aria-label="Collapse"></button></td><th class="head-cell" colspan="2">Details of Sketch3</th></tr>
          <tr><td class="gutter"></td><th>Sketch</th><td>Sketch3</td></tr>
          <tr><td class="gutter"></td><th>Sketch Visibility</th><td>Hide Sketch</td></tr>
          <tr><td class="gutter"></td><th>Show Constraints?</th><td>No</td></tr>
          <tr><td class="gutter"><button class="twist" aria-label="Collapse"></button></td><th class="head-cell" colspan="2">Dimensions: 5</th></tr>
          <tr><td class="gutter"></td><th><label><input type="checkbox">H2</label></th><td>82.5 m</td></tr>
          <tr><td class="gutter"></td><th><label><input type="checkbox">H3</label></th><td>48.161 m</td></tr>
          <tr><td class="gutter"></td><th><label><input type="checkbox">H5</label></th><td>17.9 m</td></tr>
          <tr><td class="gutter"></td><th><label><input type="checkbox">R1</label></th><td>15 m</td></tr>
          <tr><td class="gutter"></td><th><label><input type="checkbox">V4</label></th><td>10 m</td></tr>
          <tr><td class="gutter"><button class="twist" aria-label="Collapse"></button></td><th class="head-cell" colspan="2">Edges: 8</th></tr>
          <tr><td class="gutter"></td><th>Circular Arc</th><td class="locked">Cr25</td></tr>
          <tr><td class="gutter"></td><th>Line</th><td class="locked">Ln26</td></tr>
          <tr><td class="gutter"></td><th>Line</th><td class="locked">Ln27</td></tr>
          <tr><td class="gutter"></td><th>Line</th><td class="locked">Ln28</td></tr>
          <tr><td class="gutter"></td><th>Line</th><td class="locked">Ln29</td></tr>
        </tbody>
      </table>
      <div class="scroller d-flex flex-column">
        <button class="step" aria-label="Scroll up"><svg width="9" height="6"><path d="M1 5l3.500-3.500L8 5" fill="none" stroke="currentColor" stroke-width="2"/></svg></button>
        <div class="thumb"></div><div class="trail"></div>
        <button class="step" aria-label="Scroll down"><svg width="9" height="6"><path d="M1 1l3.500 3.500L8 1" fill="none" stroke="currentColor" stroke-width="2"/></svg></button>
      </div>
    </div>
  </aside>

  <section class="d-flex flex-column flex-grow-1">
    <div class="pane-head d-flex align-items-center justify-content-between">Graphics<svg width="10" height="12"><use href="#pin"/></svg></div>
    <div class="view-area">
      <svg class="scene" viewBox="451 164 1469 829" preserveAspectRatio="xMidYMid meet">
        <defs>
          <linearGradient id="gBoss" gradientUnits="userSpaceOnUse" x1="1000" y1="370" x2="1200" y2="550"><stop offset="0" stop-color="#858585"/><stop offset=".5" stop-color="#c9c9c9"/><stop offset=".85" stop-color="#bdbdbd"/><stop offset="1" stop-color="#868686"/></linearGradient>
          <linearGradient id="gBossLow" gradientUnits="userSpaceOnUse" x1="1180" y1="520" x2="1165" y2="595"><stop offset="0" stop-color="#8a8a8a" stop-opacity="0"/><stop offset="1" stop-color="#606060"/></linearGradient>
          <linearGradient id="gRim" gradientUnits="userSpaceOnUse" x1="1032" y1="300" x2="1270" y2="500"><stop offset="0" stop-color="#999"/><stop offset=".4" stop-color="#c4c4c4"/><stop offset=".75" stop-color="#c4c4c4"/><stop offset="1" stop-color="#a2a2a2"/></linearGradient>
          <linearGradient id="gRim2" gradientUnits="userSpaceOnUse" x1="1121" y1="215" x2="1350" y2="420"><stop offset="0" stop-color="#999"/><stop offset=".4" stop-color="#c4c4c4"/><stop offset=".75" stop-color="#c4c4c4"/><stop offset="1" stop-color="#a2a2a2"/></linearGradient>
          <linearGradient id="gRear" gradientUnits="userSpaceOnUse" x1="1190" y1="210" x2="1360" y2="400"><stop offset="0" stop-color="#969696"/><stop offset=".4" stop-color="#c8c8c8"/><stop offset=".75" stop-color="#c4c4c4"/><stop offset="1" stop-color="#777"/></linearGradient>
          <linearGradient id="gBore" gradientUnits="userSpaceOnUse" x1="1285" y1="365" x2="1270" y2="472"><stop offset="0" stop-color="#464646"/><stop offset=".5" stop-color="#777"/><stop offset="1" stop-color="#aaa"/></linearGradient>
          <linearGradient id="gFoot" gradientUnits="userSpaceOnUse" x1="0" y1="570" x2="0" y2="860"><stop offset="0" stop-color="#a6a6a6"/><stop offset=".35" stop-color="#c0c0c0"/><stop offset=".7" stop-color="#c8c8c8"/><stop offset="1" stop-color="#b8b8b8"/></linearGradient>
          <linearGradient id="gWing" gradientUnits="userSpaceOnUse" x1="850" y1="670" x2="985" y2="730"><stop offset="0" stop-color="#ababab"/><stop offset=".4" stop-color="#969696"/><stop offset="1" stop-color="#5c5c5c"/></linearGradient>
          <radialGradient id="gBall" cx=".4" cy=".35" r=".7"><stop offset="0" stop-color="#35d9dc"/><stop offset="1" stop-color="#087c86"/></radialGradient>
        </defs>

        <!-- rear half of the bracket -->
        <g stroke="#4a5158" stroke-width="1" stroke-linejoin="round">
          <path d="M1182 213L1193 207C1250 192 1320 232 1347 287C1365 322 1368 370 1353 402L1340 400C1330 330 1270 240 1182 213Z" fill="url(#gRear)"/>
          <path d="M1121 226L1137 213Q1167 211 1200 218C1270 238 1325 300 1343 350C1352 375 1354 392 1353 407L1337 423L1325 360C1300 280 1210 215 1121 226Z" fill="url(#gRim2)"/>
          <path d="M1337 423L1353 407L1356 480L1355 522L1318 555L1317 478L1325 440L1328 415Z" fill="#a0a0a0"/>
          <path d="M1318 555L1355 522C1360 590 1420 715 1523 759L1422 856C1300 800 1255 720 1255 618L1291 583L1300 480L1317 478Z" fill="url(#gFoot)"/>
        </g>
        <path d="M1121 226Q1147 223 1173 227C1260 243 1330 320 1337 378C1341 405 1337 440 1317 478V527C1317 630 1350 695 1443 773L1375 760C1320 700 1291 650 1291 583L1250 503L1235 400L1123 310Z" fill="#464646"/>
        <path d="M1200 352L1337 378C1341 405 1337 440 1317 478L1264 469L1235 400Z" fill="url(#gBore)"/>
        <path d="M1200 352L1337 378" stroke="#777" fill="none"/>
        <path d="M1375 760L1443 773L1417 797Q1395 783 1375 760Z" fill="#a4a4a4" stroke="#777"/>

        <!-- left wing -->
        <path d="M773 735L873 636Q910 650 947 656T1027 648L1020 668L973 722C920 760 850 765 773 735Z" fill="url(#gWing)" stroke="#5a6068"/>
        <path d="M987 684L1010 677L1000 692Z" fill="#464646"/>
        <path d="M963 708L983 687L1005 689Q985 700 963 708Z" fill="#a4a4a4"/>

        <!-- front plate, its rim and the foot block -->
        <path d="M1032 312L1045 300Q1070 296 1107 302C1180 322 1240 385 1263 470Q1270 503 1283 503H1291V583L1255 618L1240 445C1200 350 1110 300 1032 312Z" fill="url(#gRim)"/>
        <path d="M1045 300Q1070 296 1107 302C1180 322 1240 385 1263 470Q1270 503 1283 503H1291" fill="none" stroke="#555"/>
        <path d="M1252 503L1268 490L1283 503H1291V583L1255 618Z" fill="#a2a2a2"/>
        <path d="M1252 503L1268 490M1255 618L1291 583M1318 555L1355 522M1337 423L1353 407" stroke="#6c6c6c" fill="none"/>
        <path d="M1032 312C1140 298 1240 380 1252 503L1255 618C1257 710 1310 810 1422 856L1424 937L774 814L772 734Q803 750 843 753C930 760 1010 705 1028 642L1033 354Z" fill="#464646"/>
        <path d="M1422 856L1523 759L1524 840L1424 937Z" fill="#a0a0a0" stroke="#5a6068"/>

        <!-- front boss -->
        <path d="M982 403L1033 354Q1056 350 1080 352C1150 360 1211 425 1211 497C1211 530 1200 555 1185 570L1148 604L1120 600Z" fill="url(#gBoss)"/>
        <path d="M1211 490C1213 530 1200 555 1185 570L1148 604L1155 500Z" fill="url(#gBossLow)"/>
        <path d="M982 403Q1000 400 1019 400C1095 410 1160 470 1160 550C1160 605 1115 645 1063 644C1035 643 1010 632 987 620Z" fill="#464646"/>
        <path d="M1148 604C1125 634 1093 645 1063 644Q1045 643 1028 640" fill="none" stroke="#858585"/>

        <!-- scale ruler -->
        <g font-size="11" fill="#000" text-anchor="middle">
          <path d="M946 933.500h478v15h-478z" fill="#fff" stroke="#000"/>
          <path d="M946 933h120v16h-120zM1185 933h120v16h-120z"/>
          <text x="946" y="930">0.00</text><text x="1185" y="930">40.00</text><text x="1435" y="930">80.00 (m)</text>
          <text x="1065" y="969">20.00</text><text x="1305" y="969">60.00</text>
        </g>

        <!-- orientation triad -->
        <path d="M1811 892V835" stroke="#12701c" stroke-width="5"/><path d="M1810 817L1819 836Q1810 841 1802 836Z" fill="#0f7d1a"/>
        <path d="M1812 892L1870 902" stroke="#971016" stroke-width="5"/><path d="M1868 894L1888 906L1866 911Z" fill="#c0141a"/>
        <path d="M1812 892L1787 915" stroke="#0808b0" stroke-width="5"/><circle cx="1784.500" cy="918" r="8" fill="#0a0ac8"/><path d="M1777 915L1775 926L1788 925Z" fill="#0a0ac8"/>
        <circle cx="1830" cy="879" r="8" fill="url(#gBall)"/>
        <g font-size="12" text-anchor="middle"><text x="1813" y="806" fill="#3d6a78">Y</text><text x="1902" y="909" fill="#d0222e">X</text><text x="1773" y="932" fill="#16163e">Z</text></g>

        <!-- watermark -->
        <g fill="#edf4fc" fill-opacity=".9" style="filter:drop-shadow(1px 1px 0 #4c5563)">
          <text x="578" y="546" font-size="80" font-weight="300" font-family="'Noto Sans CJK SC',sans-serif">莫西网</text>
          <text x="817" y="544" font-size="67" font-family="'Liberation Mono',monospace">www.3dmox.com</text>
        </g>
      </svg>
      <div class="brand"><b>ANSYS</b><span>2021 <strong>R1</strong></span></div>
    </div>
    <div class="view-tabs"><button class="tab-btn view-front">Model View</button><button class="tab-btn view-back">Print Preview</button></div>
  </section>
</main>

<footer class="status d-flex">
  <div class="cell flex-grow-1 d-flex align-items-center"><svg class="ms-2" width="17" height="17" viewBox="0 0 17 17"><circle cx="8.500" cy="8.500" r="8" fill="#1f8a4c"/><path d="M3 6a7 6 0 0 1 11 0z" fill="#5cb880"/><path d="M5 8.500l3 3 5-6" fill="none" stroke="#fff" stroke-width="2"/></svg><span class="ms-2 ps-1">Ready</span></div>
  <div class="cell cell-sel">No Selection</div>
  <div class="cell cell-unit">Meter   Degree</div>
  <div class="cell cell-num">0</div>
  <div class="cell cell-num">0</div>
  <svg class="align-self-end" width="18" height="16"><path d="M4 16L17 3M9 16l8-8M14 16l3-3" stroke="#888" stroke-width="1.500"/></svg>
</footer>
</body>
</html>
